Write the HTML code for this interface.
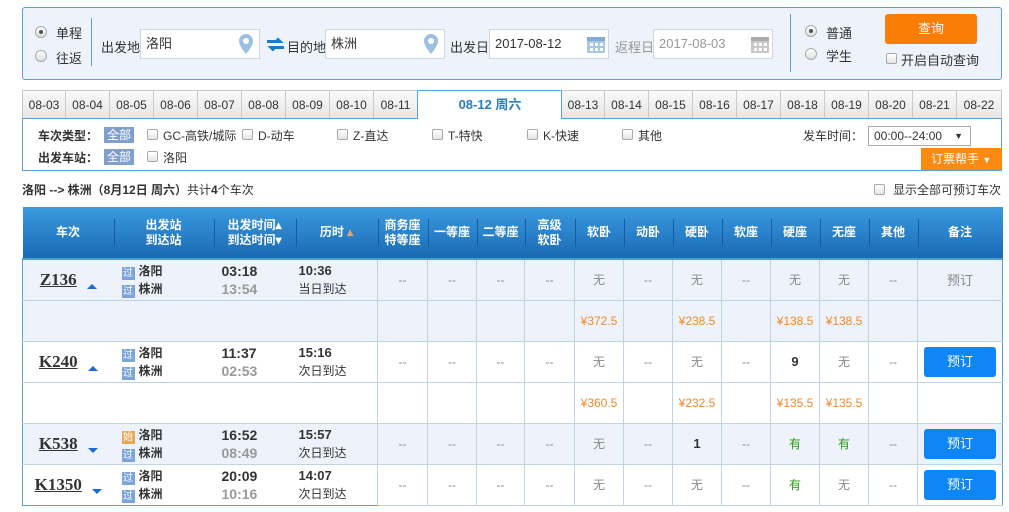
<!DOCTYPE html>
<html><head><meta charset="utf-8"><style>
*{margin:0;padding:0;box-sizing:border-box}
body{width:1009px;height:512px;background:#fff;font-family:"Liberation Sans","Noto Sans CJK SC",sans-serif;font-size:12px;color:#333;position:relative;overflow:hidden}
.a{position:absolute}
.sb{left:22px;top:7px;width:980px;height:73px;background:#eef3fb;border:1px solid #5aa2d6;border-radius:3px}
.radio{width:12px;height:12px;border-radius:50%;border:1px solid #aaa;background:linear-gradient(#fff,#ddd)}
.radio.on::after{content:"";position:absolute;left:3px;top:3px;width:4px;height:4px;border-radius:50%;background:#555}
.inp{background:#fff;border:1px solid #cfd8e0;height:30px;font-size:13px;line-height:28px;padding-left:5px}
.cb{width:11px;height:11px;border:1px solid #aaa;border-radius:2px;background:linear-gradient(#fff,#e4e4e4)}
.tab{top:90px;height:29px;width:44px;border:1px solid #c9c9c9;border-left:none;background:linear-gradient(#fafafa,#e6e6e6);font-size:12px;text-align:center;line-height:28px;color:#333}
.fb{left:22px;top:119px;width:980px;height:52px;border:1px solid #5aa2d6;border-top:none}
.all{background:#7f9fcf;color:#fff;padding:0 3px;height:16px;line-height:16px}
table{position:absolute;left:22px;top:207px;border-collapse:collapse;width:980px;table-layout:fixed}
th{height:52px;background:linear-gradient(#3a9ae0,#1a6ab4);color:#fff;font-weight:bold;font-size:12px;line-height:15px;position:relative;border-bottom:2px solid #4a9ed8}
th+th::before{content:"";position:absolute;left:0;top:12px;height:28px;border-left:1px solid #185a9c}
td{height:41px;border:1px solid #bcd4e6;text-align:center;color:#888;font-size:12px}
tr.g td{background:#eef3fb}
tr.w td{background:#fff}
td.l{border-left:none;border-right:none}
.tn{font-weight:bold;font-size:17px;color:#333;text-decoration:underline;font-family:"Liberation Serif",serif}
.ar{display:inline-block;width:0;height:0;border-left:5px solid transparent;border-right:5px solid transparent;margin-left:10px;vertical-align:-4px}
.up{border-bottom:5px solid #1a6ad8}.dn{border-top:5px solid #1a6ad8}
.st{text-align:left;font-weight:bold;color:#333;font-size:12px;line-height:18px;padding-left:8px}
.ic{display:inline-block;width:13px;height:13px;background:#7ba4dc;color:#fff;font-size:10px;line-height:13px;text-align:center;margin-right:4px;vertical-align:-1px;font-weight:normal}
.tm{text-align:left;font-weight:bold;font-size:14px;line-height:18px;color:#333;padding-left:8px}
.tm .g2{color:#999}
.du{text-align:left;font-size:12px;line-height:18px;color:#333;padding-left:3px}
.du b{font-size:13px}
.pr{color:#f08a2c}
.yes{color:#2a9a14}
.num{color:#333;font-weight:bold;font-size:13px}
.btn{display:inline-block;width:72px;height:30px;background:#0f86f5;border-radius:3px;color:#fff;line-height:30px;font-size:13px}
td.r{border-right:1px solid #5aa2d6}
</style></head><body>
<div class="a sb"></div>
<div class="a radio on" style="left:35px;top:26px"></div><div class="a" style="left:56px;top:23px;font-size:13px">单程</div>
<div class="a radio" style="left:35px;top:50px"></div><div class="a" style="left:56px;top:48px;font-size:13px">往返</div>
<div class="a" style="left:91px;top:18px;height:48px;border-left:1px solid #5aa2d6"></div>
<div class="a" style="left:101px;top:37px;font-size:13px">出发地</div>
<div class="a inp" style="left:140px;top:29px;width:120px">洛阳</div>
<svg class="a" style="left:238px;top:33px" width="16" height="22"><path d="M8 1a7 7 0 0 0-7 7c0 5 7 13 7 13s7-8 7-13a7 7 0 0 0-7-7z" fill="#9cc0e2"/><circle cx="8" cy="8" r="3" fill="#fff"/></svg>
<svg class="a" style="left:266px;top:37px" width="19" height="15"><path d="M1 4.5h13l-3-3M18 10.5H5l3 3" stroke="#1a7cc8" stroke-width="3" fill="none"/></svg>
<div class="a" style="left:287px;top:37px;font-size:13px">目的地</div>
<div class="a inp" style="left:325px;top:29px;width:120px">株洲</div>
<svg class="a" style="left:423px;top:33px" width="16" height="22"><path d="M8 1a7 7 0 0 0-7 7c0 5 7 13 7 13s7-8 7-13a7 7 0 0 0-7-7z" fill="#9cc0e2"/><circle cx="8" cy="8" r="3" fill="#fff"/></svg>
<div class="a" style="left:450px;top:37px;font-size:13px">出发日</div>
<div class="a inp" style="left:489px;top:29px;width:120px;color:#333">2017-08-12</div>
<svg class="a" style="left:586px;top:34px" width="20" height="20"><rect x="1" y="3" width="18" height="16" fill="#a8c8e4"/><rect x="1" y="3" width="18" height="4" fill="#7eaed8"/><g fill="#fff"><rect x="4" y="9" width="3" height="3"/><rect x="9" y="9" width="3" height="3"/><rect x="14" y="9" width="3" height="3"/><rect x="4" y="14" width="3" height="3"/><rect x="9" y="14" width="3" height="3"/><rect x="14" y="14" width="3" height="3"/></g></svg>
<div class="a" style="left:615px;top:37px;font-size:13px;color:#999">返程日</div>
<div class="a inp" style="left:653px;top:29px;width:120px;color:#999">2017-08-03</div>
<svg class="a" style="left:750px;top:34px" width="20" height="20"><rect x="1" y="3" width="18" height="16" fill="#c8c8c8"/><rect x="1" y="3" width="18" height="4" fill="#aaa"/><g fill="#fff"><rect x="4" y="9" width="3" height="3"/><rect x="9" y="9" width="3" height="3"/><rect x="14" y="9" width="3" height="3"/><rect x="4" y="14" width="3" height="3"/><rect x="9" y="14" width="3" height="3"/><rect x="14" y="14" width="3" height="3"/></g></svg>
<div class="a" style="left:790px;top:14px;height:58px;border-left:1px solid #5aa2d6"></div>
<div class="a radio on" style="left:805px;top:25px"></div><div class="a" style="left:826px;top:23px;font-size:13px">普通</div>
<div class="a radio" style="left:805px;top:48px"></div><div class="a" style="left:826px;top:46px;font-size:13px">学生</div>
<div class="a" style="left:885px;top:14px;width:92px;height:30px;background:#fa7d05;border-radius:3px;color:#fff;text-align:center;line-height:30px;font-size:13px">查询</div>
<div class="a cb" style="left:886px;top:53px"></div><div class="a" style="left:901px;top:50px;font-size:13px">开启自动查询</div>

<div class="a tab" style="left:22px;border-left:1px solid #c9c9c9">08-03</div>
<div class="a tab" style="left:66px">08-04</div>
<div class="a tab" style="left:110px">08-05</div>
<div class="a tab" style="left:154px">08-06</div>
<div class="a tab" style="left:198px">08-07</div>
<div class="a tab" style="left:242px">08-08</div>
<div class="a tab" style="left:286px">08-09</div>
<div class="a tab" style="left:330px">08-10</div>
<div class="a tab" style="left:374px;border-right:1px solid #5aa2d6">08-11</div>
<div class="a" style="left:418px;top:90px;width:144px;height:30px;background:#fff;border-top:1px solid #5aa2d6;color:#2a7cc0;font-weight:bold;font-size:13px;text-align:center;line-height:28px">08-12 周六</div>
<div class="a tab" style="left:561px;border-left:1px solid #5aa2d6">08-13</div>
<div class="a tab" style="left:605px">08-14</div>
<div class="a tab" style="left:649px">08-15</div>
<div class="a tab" style="left:693px">08-16</div>
<div class="a tab" style="left:737px">08-17</div>
<div class="a tab" style="left:781px">08-18</div>
<div class="a tab" style="left:825px">08-19</div>
<div class="a tab" style="left:869px">08-20</div>
<div class="a tab" style="left:913px">08-21</div>
<div class="a tab" style="left:957px;width:45px">08-22</div>
<div class="a" style="left:22px;top:118px;width:396px;border-top:1px solid #5aa2d6"></div>
<div class="a" style="left:561px;top:118px;width:441px;border-top:1px solid #5aa2d6"></div>
<div class="a fb"></div>
<div class="a" style="left:38px;top:127px;font-weight:bold;font-size:12px">车次类型：</div>
<div class="a all" style="left:104px;top:127px">全部</div>
<div class="a cb" style="left:147px;top:129px"></div><div class="a" style="left:163px;top:127px">GC-高铁/城际</div>
<div class="a cb" style="left:242px;top:129px"></div><div class="a" style="left:258px;top:127px">D-动车</div>
<div class="a cb" style="left:337px;top:129px"></div><div class="a" style="left:353px;top:127px">Z-直达</div>
<div class="a cb" style="left:432px;top:129px"></div><div class="a" style="left:448px;top:127px">T-特快</div>
<div class="a cb" style="left:527px;top:129px"></div><div class="a" style="left:543px;top:127px">K-快速</div>
<div class="a cb" style="left:622px;top:129px"></div><div class="a" style="left:638px;top:127px">其他</div>
<div class="a" style="left:803px;top:127px">发车时间：</div>
<div class="a" style="left:868px;top:126px;width:103px;height:20px;border:1px solid #aaa;background:#fff;padding-left:5px;line-height:18px">00:00--24:00<span style="position:absolute;right:7px;font-size:9px">▼</span></div>
<div class="a" style="left:38px;top:149px;font-weight:bold;font-size:12px">出发车站：</div>
<div class="a all" style="left:104px;top:149px">全部</div>
<div class="a cb" style="left:147px;top:151px"></div><div class="a" style="left:163px;top:149px">洛阳</div>
<div class="a" style="left:921px;top:148px;width:81px;height:22px;background:#fa8a12;color:#fff;line-height:22px;padding-left:10px;font-size:12px">订票帮手 <span style="font-size:9px">▼</span></div>
<div class="a" style="left:22px;top:181px;font-size:12px"><b>洛阳 --&gt; 株洲（8月12日  周六）</b>共计<b>4</b>个车次</div>
<div class="a cb" style="left:874px;top:184px"></div><div class="a" style="left:893px;top:181px">显示全部可预订车次</div>

<table>
<colgroup><col style="width:91px"><col style="width:100px"><col style="width:82px"><col style="width:82px"><col style="width:50px"><col style="width:49px"><col style="width:48px"><col style="width:50px"><col style="width:49px"><col style="width:49px"><col style="width:49px"><col style="width:49px"><col style="width:49px"><col style="width:49px"><col style="width:49px"><col style="width:85px"></colgroup>
<tr><th>车次</th><th>出发站<br>到达站</th><th>出发时间▴<br>到达时间▾</th><th>历时 <span style="color:#f0a060">▴</span></th><th>商务座<br>特等座</th><th>一等座</th><th>二等座</th><th>高级<br>软卧</th><th>软卧</th><th>动卧</th><th>硬卧</th><th>软座</th><th>硬座</th><th>无座</th><th>其他</th><th>备注</th></tr>
<tr class="g"><td class="l" style="border-left:1px solid #5aa2d6"><span class="tn">Z136</span><span class="ar up"></span></td><td class="l st"><span class="ic">过</span>洛阳<br><span class="ic">过</span>株洲</td><td class="l tm">03:18<br><span class="g2">13:54</span></td><td class="l du"><b>10:36</b><br>当日到达</td><td>--</td><td>--</td><td>--</td><td>--</td><td>无</td><td>--</td><td>无</td><td>--</td><td>无</td><td>无</td><td>--</td><td class="r" style="font-size:13px">预订</td></tr>
<tr class="g"><td colspan="4" class="l" style="border-left:1px solid #5aa2d6"></td><td></td><td></td><td></td><td></td><td class="pr">¥372.5</td><td></td><td class="pr">¥238.5</td><td></td><td class="pr">¥138.5</td><td class="pr">¥138.5</td><td></td><td class="r"></td></tr>
<tr class="w"><td class="l" style="border-left:1px solid #5aa2d6"><span class="tn">K240</span><span class="ar up"></span></td><td class="l st"><span class="ic">过</span>洛阳<br><span class="ic">过</span>株洲</td><td class="l tm">11:37<br><span class="g2">02:53</span></td><td class="l du"><b>15:16</b><br>次日到达</td><td>--</td><td>--</td><td>--</td><td>--</td><td>无</td><td>--</td><td>无</td><td>--</td><td class="num">9</td><td>无</td><td>--</td><td class="r"><span class="btn">预订</span></td></tr>
<tr class="w"><td colspan="4" class="l" style="border-left:1px solid #5aa2d6"></td><td></td><td></td><td></td><td></td><td class="pr">¥360.5</td><td></td><td class="pr">¥232.5</td><td></td><td class="pr">¥135.5</td><td class="pr">¥135.5</td><td></td><td class="r"></td></tr>
<tr class="g"><td class="l" style="border-left:1px solid #5aa2d6"><span class="tn">K538</span><span class="ar dn"></span></td><td class="l st"><span class="ic" style="background:#e8a855">始</span>洛阳<br><span class="ic">过</span>株洲</td><td class="l tm">16:52<br><span class="g2">08:49</span></td><td class="l du"><b>15:57</b><br>次日到达</td><td>--</td><td>--</td><td>--</td><td>--</td><td>无</td><td>--</td><td class="num">1</td><td>--</td><td class="yes">有</td><td class="yes">有</td><td>--</td><td class="r"><span class="btn">预订</span></td></tr>
<tr class="w"><td class="l" style="border-left:1px solid #5aa2d6;border-bottom:1px solid #5aa2d6"><span class="tn">K1350</span><span class="ar dn"></span></td><td class="l st" style="border-bottom:1px solid #5aa2d6"><span class="ic">过</span>洛阳<br><span class="ic">过</span>株洲</td><td class="l tm" style="border-bottom:1px solid #5aa2d6">20:09<br><span class="g2">10:16</span></td><td class="l du" style="border-bottom:1px solid #5aa2d6"><b>14:07</b><br>次日到达</td><td>--</td><td>--</td><td>--</td><td>--</td><td>无</td><td>--</td><td>无</td><td>--</td><td class="yes">有</td><td>无</td><td>--</td><td class="r"><span class="btn">预订</span></td></tr>
</table>
</body></html>
